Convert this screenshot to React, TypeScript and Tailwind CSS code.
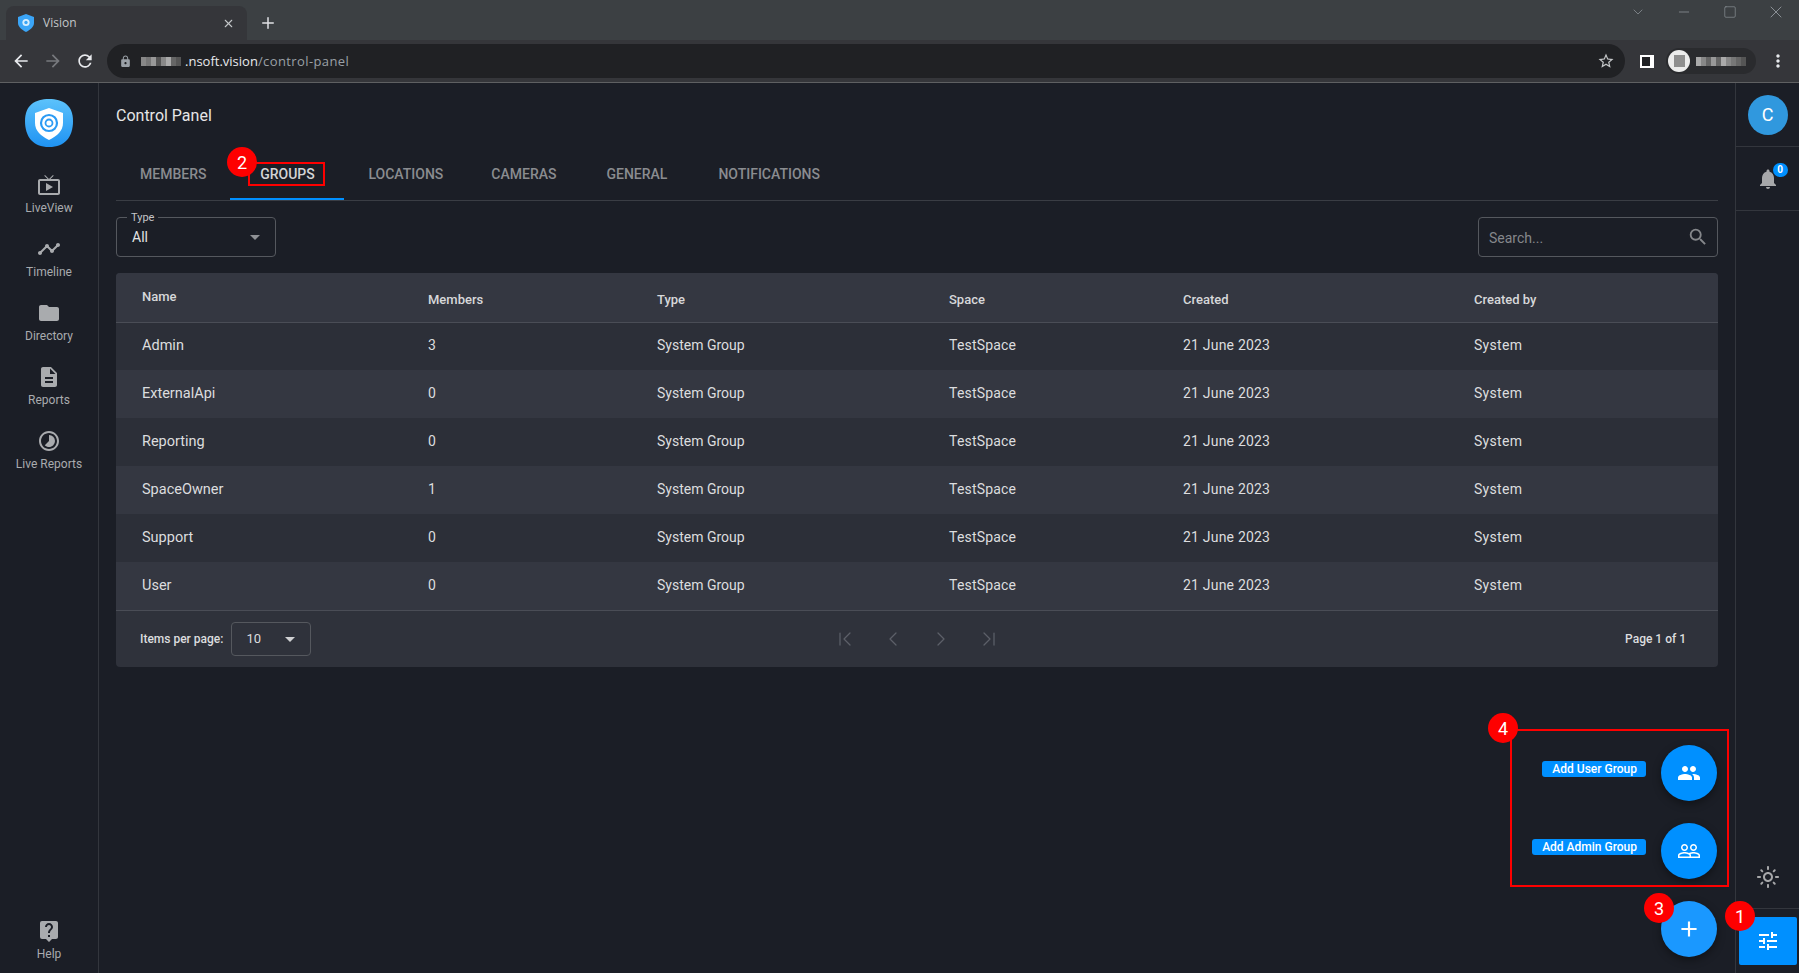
import { MdAdd, MdArrowBack, MdArrowForward, MdDescription, MdFolder, MdLiveHelp, MdLock, MdMoreVert, MdNotifications, MdOutlineLightMode, MdOutlineLiveTv, MdPeople, MdPeopleOutline, MdRefresh, MdSearch, MdStarBorder, MdTimelapse, MdTimeline, MdTune } from "react-icons/md";
import { ChevronDown, ChevronFirst, ChevronLast, ChevronLeft, ChevronRight, Minus, Plus, Square, X } from "lucide-react";

const rows = [
  ["Admin", "3"],
  ["ExternalApi", "0"],
  ["Reporting", "0"],
  ["SpaceOwner", "1"],
  ["Support", "0"],
  ["User", "0"],
];

const nav = [
  { label: "LiveView", icon: MdOutlineLiveTv },
  { label: "Timeline", icon: MdTimeline },
  { label: "Directory", icon: MdFolder },
  { label: "Reports", icon: MdDescription },
  { label: "Live Reports", icon: MdTimelapse },
];

function ShieldLogo() {
  return (
    <svg viewBox="0 0 48 48" className="w-12 h-12">
      <defs>
        <linearGradient id="logoBg" x1="0" y1="0" x2="0" y2="1">
          <stop offset="0" stopColor="#5cc2fb" />
          <stop offset="1" stopColor="#1f93f3" />
        </linearGradient>
      </defs>
      <path d="M24 0C38 0 48 6 48 22C48 38 40 48 24 48C8 48 0 38 0 22C0 6 10 0 24 0Z" fill="url(#logoBg)" />
      <path d="M24 9L38 14V24C38 32 32 37 24 41C16 37 10 32 10 24V14Z" fill="#fff" />
      <circle cx="24" cy="24" r="8" fill="none" stroke="#2b9bf4" strokeWidth="2.2" />
      <circle cx="24" cy="24" r="3.5" fill="none" stroke="#2b9bf4" strokeWidth="1.8" />
    </svg>
  );
}

function Favicon() {
  return (
    <svg viewBox="0 0 16 18" className="w-4 h-[18px] shrink-0">
      <path d="M8 0L16 3V9C16 13 12 16 8 18C4 16 0 13 0 9V3Z" fill="#3ba5f7" />
      <circle cx="8" cy="8.5" r="3.6" fill="#d8eefd" />
      <circle cx="8" cy="8.5" r="1.7" fill="#3ba5f7" />
    </svg>
  );
}

function Blur({ widths }: { widths: string[] }) {
  return (
    <div className="flex items-center">
      {widths.map((c, i) => (
        <div key={i} className="w-[5px] h-[9px]" style={{ backgroundColor: c }} />
      ))}
    </div>
  );
}

function Marker({ n, className }: { n: number; className: string }) {
  return (
    <div className={`absolute w-[30px] h-[30px] rounded-full bg-[#fe0000] text-white text-[18px] flex items-center justify-center ${className}`}>
      {n}
    </div>
  );
}

function Fab({ children, className }: { children: React.ReactNode; className: string }) {
  return (
    <div className={`w-14 h-14 rounded-full text-white flex items-center justify-center shadow-[0_3px_8px_rgba(0,0,0,0.4)] ${className}`}>
      {children}
    </div>
  );
}

export default function App() {
  return (
    <div className="relative w-[1799px] h-[973px] overflow-hidden flex flex-col bg-[#1b1e26] font-['Roboto',sans-serif] text-[#e3e3e3]">
      {/* browser chrome */}
      <div className="h-10 bg-[#3c4043] flex items-end pl-[6px] shrink-0">
        <div className="w-[241px] h-[34px] bg-[#35363a] rounded-t-lg flex items-center px-3 gap-[9px]">
          <Favicon />
          <span className="text-[12px] text-[#c4c7c9] font-['Open_Sans',sans-serif] flex-1">Vision</span>
          <X size={13} strokeWidth={2} className="text-[#c4c7c9]" />
        </div>
        <Plus size={18} strokeWidth={2} className="text-[#dfe1e5] ml-3 mb-[8px]" />
        <div className="ml-auto grid grid-cols-4 w-[184px] self-start mt-[4px] text-[#9aa0a6]">
          <div className="flex justify-center"><ChevronDown size={16} strokeWidth={1} /></div>
          <div className="flex justify-center"><Minus size={16} strokeWidth={1} /></div>
          <div className="flex justify-center"><Square size={14} strokeWidth={1} className="mt-[1px]" /></div>
          <div className="flex justify-center"><X size={20} strokeWidth={1} className="-mt-[2px]" /></div>
        </div>
      </div>
      <div className="h-[43px] bg-[#35363a] border-b border-[#5f6062] flex items-center pl-[11px] pr-[11px] shrink-0">
        <MdArrowBack size={20} className="text-[#e8eaed]" />
        <MdArrowForward size={20} className="text-[#77797d] ml-[12px]" />
        <MdRefresh size={20} className="text-[#e8eaed] ml-[12px]" />
        <div className="ml-[12px] w-[1518px] h-[34px] rounded-full bg-[#202124] flex items-center pl-[12px] pr-[10px] text-[13px]">
          <MdLock size={13} className="text-[#9aa0a6]" />
          <div className="ml-[9px] mr-[4px]">
            <Blur widths={["#888", "#777", "#999", "#555", "#888", "#aaa", "#666", "#555"]} />
          </div>
          <span className="text-[#e8eaed] font-['Open_Sans',sans-serif] pt-[1px]">.nsoft.vision</span>
          <span className="text-[#9aa0a6] font-['Open_Sans',sans-serif] tracking-[0.4px] pt-[1px]">/control-panel</span>
          <MdStarBorder size={18} className="ml-auto text-[#c4c7c9]" />
        </div>
        <div className="ml-[15px] w-[14px] h-[13px] bg-white flex shrink-0">
          <div className="w-[8px] h-[9px] bg-[#202124] mt-[2px] ml-[2px]" />
        </div>
        <div className="ml-[12px] w-[90px] h-[26px] rounded-full bg-[#2a2b2e] flex items-center gap-[6px] pl-[2px]">
          <div className="w-[22px] h-[22px] rounded-full bg-[#ececec] flex items-center justify-center shrink-0">
            <div className="w-[11px] h-[12px] bg-[#8f8f8f]" />
          </div>
          <Blur widths={["#aaa", "#888", "#666", "#999", "#666", "#aaa", "#888", "#777", "#666", "#555"]} />
        </div>
        <MdMoreVert size={20} className="ml-auto text-[#e8eaed]" />
      </div>

      <div className="flex flex-1 min-h-0">
        {/* left nav */}
        <aside className="w-[99px] border-r border-[#33363d] flex flex-col items-center shrink-0">
          <div className="mt-4">
            <ShieldLogo />
          </div>
          <div className="mt-[26px] flex flex-col w-full">
            {nav.map((n) => (
              <div key={n.label} className="h-16 flex flex-col items-center text-[#a9abae]">
                <n.icon size={24} />
                <span className="text-[12px] leading-4 mt-[3px]">{n.label}</span>
              </div>
            ))}
          </div>
          <div className="mt-auto mb-[11px] flex flex-col items-center text-[#a9abae]">
            <MdLiveHelp size={24} />
            <span className="text-[12px] leading-4 mt-[3px]">Help</span>
          </div>
        </aside>

        {/* content */}
        <main className="flex-1 min-w-0 pl-[17px] pr-[17px] pt-[21px]">
          <h1 className="text-[16px] leading-6 text-[#e6e6e6]">Control Panel</h1>
          <div className="mt-[25px] flex h-12 border-b border-[#3a3d44] text-[14px] font-medium text-[#8a8c90]">
            <div className="px-6 pb-1 flex items-center">MEMBERS</div>
            <div className="px-4 pb-[2px] w-[114px] flex items-center justify-center text-[#d3d4d6] border-b-2 border-[#0090ff]">GROUPS</div>
            <div className="px-6 pb-1 flex items-center">LOCATIONS</div>
            <div className="px-6 pb-1 flex items-center">CAMERAS</div>
            <div className="pl-[26px] pr-[27px] pb-1 flex items-center">GENERAL</div>
            <div className="px-6 pb-1 flex items-center">NOTIFICATIONS</div>
          </div>

          <div className="mt-4 flex justify-between h-10">
            <div className="relative w-[160px] border border-[#55585e] rounded-[4px] flex items-center pl-[15px] pr-[15px] text-[14px]">
              <span className="absolute -top-[7px] left-[10px] bg-[#1b1e26] px-[4px] text-[11px] leading-[14px] text-[#c4c5c7]">Type</span>
              <span className="pt-[1px]">All</span>
              <div className="ml-auto w-0 h-0 border-x-[5px] border-x-transparent border-t-[5px] border-t-[#8f9195]" />
            </div>
            <div className="w-[240px] border border-[#55585e] rounded-[4px] flex items-center pl-[10px] pr-[8px] text-[14px] text-[#85878b]">
              <span className="pt-[3px]">Search...</span>
              <MdSearch size={22} className="ml-auto" />
            </div>
          </div>

          <div className="mt-4 rounded-[4px] bg-[#2f323b] overflow-hidden text-[14px]">
            <div className="h-[50px] grid grid-cols-[286px_229px_292px_234px_291px_1fr] items-center pl-[26px] pt-[5px] bg-[#343741] border-b border-[#4a4d56] text-[13px] font-medium text-[#d7d8da]">
              <span className="-mt-[6px]">Name</span>
              <span>Members</span>
              <span>Type</span>
              <span>Space</span>
              <span>Created</span>
              <span>Created by</span>
            </div>
            {rows.map(([name, members], i) => (
              <div key={name} className={`grid grid-cols-[286px_229px_292px_234px_291px_1fr] items-center pl-[26px] text-[#dcdddf] ${i === 0 ? "h-[47px] pb-[3px]" : "h-12 pb-[2px]"} ${i % 2 === 0 ? "bg-[#2c2f38]" : "bg-[#343741]"}`}>
                <span className="text-[14.5px] pt-[2px]">{name}</span>
                <span>{members}</span>
                <span>System Group</span>
                <span className="tracking-[0.2px]">TestSpace</span>
                <span className="tracking-[0.2px]">21 June 2023</span>
                <span className="tracking-[0.3px]">System</span>
              </div>
            ))}
            <div className="h-[57px] border-t border-[#4a4d56] flex items-center pl-6 pr-[32px] text-[12px] text-[#dcdddf]">
              <span className="font-medium">Items per page:</span>
              <div className="ml-2 w-[80px] h-[34px] border border-[#55585e] rounded-[4px] flex items-center pl-[14px] pr-[15px]">
                <span className="text-[13px]">10</span>
                <div className="ml-auto w-0 h-0 border-x-[5px] border-x-transparent border-t-[5px] border-t-[#d0d1d3]" />
              </div>
              <div className="ml-[522px] flex items-center gap-6 text-[#5c6068]">
                <ChevronFirst size={24} strokeWidth={1.25} />
                <ChevronLeft size={24} strokeWidth={1.25} />
                <ChevronRight size={24} strokeWidth={1.25} />
                <ChevronLast size={24} strokeWidth={1.25} />
              </div>
              <span className="ml-auto font-medium">Page 1 of 1</span>
            </div>
          </div>
        </main>

        {/* right rail */}
        <aside className="w-[64px] border-l border-[#33363d] flex flex-col shrink-0">
          <div className="h-[64px] border-b border-[#33363d] flex items-center justify-center">
            <div className="w-10 h-10 rounded-full bg-[#3098de] text-white text-[18px] flex items-center justify-center">C</div>
          </div>
          <div className="h-[64px] border-b border-[#33363d] flex items-center justify-center">
            <div className="relative">
              <MdNotifications size={24} className="text-[#a6a7a9]" />
              <span className="absolute -top-[4px] -right-[8px] w-[15px] h-[14px] rounded-full bg-[#0090ff] text-white text-[10px] font-bold flex items-center justify-center">0</span>
            </div>
          </div>
          <div className="mt-auto flex flex-col">
            <div className="h-[43px] flex items-start justify-center">
              <MdOutlineLightMode size={24} className="text-[#a6a7a9]" />
            </div>
            <div className="h-[65px] border-t border-[#33363d] pt-[8px] pl-[3px]">
              <div className="w-[58px] h-12 bg-[#0090ff] rounded-[2px] flex items-center justify-center">
                <MdTune size={24} className="text-white" />
              </div>
            </div>
          </div>
        </aside>
      </div>

      {/* speed dial, floats over the page */}
      <div className="absolute right-[82px] top-[745px] flex flex-col items-end gap-[22px]">
        <div className="flex items-center gap-[15px]">
          <span className="mt-[-9px] h-4 pl-[10px] pr-[9px] rounded-[3px] bg-[#0090ff] text-white text-[12px] font-medium leading-4">Add User Group</span>
          <Fab className="bg-[#0090ff]"><MdPeople size={24} /></Fab>
        </div>
        <div className="flex items-center gap-[15px]">
          <span className="mt-[-9px] h-4 pl-[10px] pr-[9px] rounded-[3px] bg-[#0090ff] text-white text-[12px] font-medium leading-4">Add Admin Group</span>
          <Fab className="bg-[#0090ff]"><MdPeopleOutline size={24} /></Fab>
        </div>
        <Fab className="bg-[#1a98ff]"><MdAdd size={26} /></Fab>
      </div>

      {/* annotations on the screenshot */}
      <div className="absolute left-[248px] top-[162px] w-[77px] h-[24px] border-2 border-[#fe0000]" />
      <div className="absolute left-[1510px] top-[729px] w-[219px] h-[158px] border-2 border-[#fe0000]" />
      <Marker n={2} className="left-[227px] top-[147px]" />
      <Marker n={4} className="left-[1488px] top-[713px]" />
      <Marker n={3} className="left-[1644px] top-[893px]" />
      <Marker n={1} className="left-[1725px] top-[901px]" />
    </div>
  );
}
